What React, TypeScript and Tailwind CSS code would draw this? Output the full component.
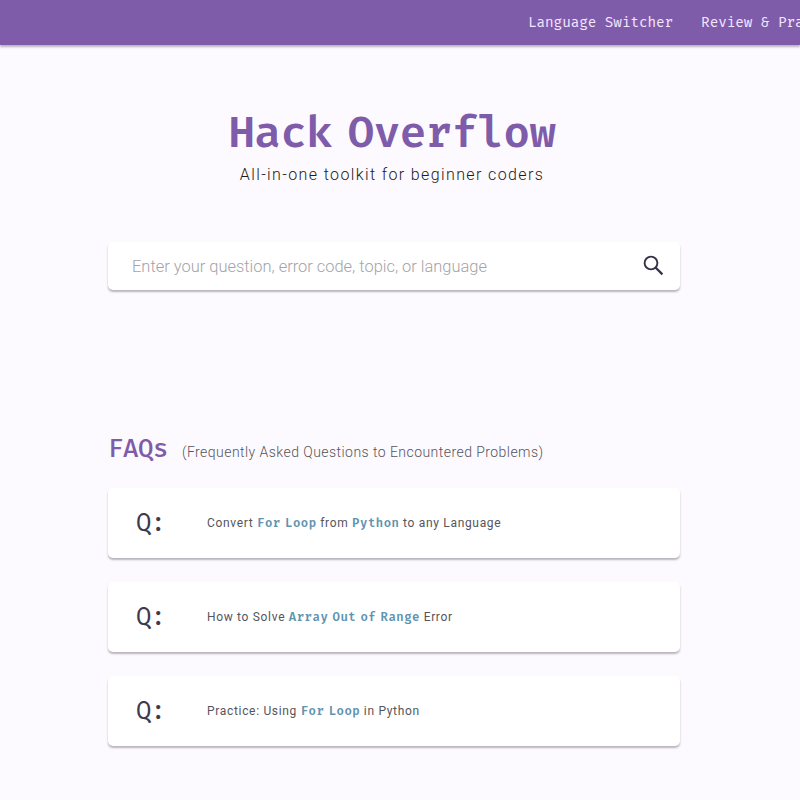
import type { ReactNode } from "react";

const mono = "font-['Fira_Code','DejaVu_Sans_Mono',monospace]";

function Code({ children }: { children: ReactNode }) {
  return (
    <span className={`${mono} text-[12px] font-semibold tracking-[0.5px] text-[#5f93ae] [word-spacing:-3.6px]`}>
      {children}
    </span>
  );
}

function Question({ children }: { children: ReactNode }) {
  return (
    <li className="flex h-[70px] items-center rounded-[5px] bg-white pl-7 shadow-[0_2px_2px_rgba(60,50,70,0.35)]">
      <span className={`${mono} w-[71px] text-[25px] leading-none tracking-[-0.8px] text-[#3c3a4c]`}>Q:</span>
      <p className="whitespace-nowrap text-[12px] leading-4 tracking-[0.68px] text-[#55555c]">{children}</p>
    </li>
  );
}

export default function App() {
  return (
    <div className="h-[800px] w-[800px] overflow-hidden bg-[#fcfafe] font-[Roboto,sans-serif]">
      <nav className={`${mono} flex h-[45px] items-center overflow-hidden whitespace-nowrap bg-[#7f5caa] pb-px pl-[528px] text-[14px] tracking-[-0.08px] text-[#f4e6ff] shadow-[0_2px_2px_rgba(60,50,70,0.35)]`}>
        <a className="mr-[28px]">Language Switcher</a>
        <a className="pt-px">Review &amp; Pra</a>
      </nav>
      <main className="ml-[108px] w-[572px]">
        <header className="flex flex-col items-center pt-[61px] pr-1">
          <h1 className={`${mono} whitespace-nowrap text-[43px] font-semibold leading-[55px] tracking-[-0.5px] text-[#7f5caa] [word-spacing:-10.5px]`}>Hack Overflow</h1>
          <p className="pt-[2px] text-[16px] font-light leading-6 tracking-[1.38px] text-[#1c1b20]">All-in-one toolkit for beginner coders</p>
        </header>
        <form className="mt-[55px] flex h-[48px] items-center justify-between rounded-[5px] bg-white pl-6 pr-[13px] shadow-[0_2px_2px_rgba(60,50,70,0.35)]">
          <span className="whitespace-nowrap pt-[2px] text-[16.45px] font-light text-[#a3a3a8]">Enter your question, error code, topic, or language</span>
          <svg viewBox="0 0 26 26" className="size-[26px] fill-none stroke-[#35334a]">
            <circle cx="10" cy="10" r="6.4" strokeWidth="1.9" />
            <path d="M14.3 14.3 21.4 21.4" strokeWidth="2.3" />
          </svg>
        </form>
        <section className="pt-[144px]">
          <div className="flex items-baseline whitespace-nowrap">
            <h2 className={`${mono} w-[74px] text-[25px] font-medium leading-8 tracking-[-0.4px] text-[#7f5caa]`}>FAQs</h2>
            <p className="text-[14px] font-light tracking-[0.45px] text-[#55555c]">(Frequently Asked Questions to Encountered Problems)</p>
          </div>
          <ul className="mt-[22px] flex flex-col gap-6">
            <Question>Convert <Code>For Loop</Code> from <Code>Python</Code> to any Language</Question>
            <Question>How to Solve <Code>Array Out of Range</Code> Error</Question>
            <Question>Practice: Using <Code>For Loop</Code> in Python</Question>
          </ul>
        </section>
      </main>
    </div>
  );
}
